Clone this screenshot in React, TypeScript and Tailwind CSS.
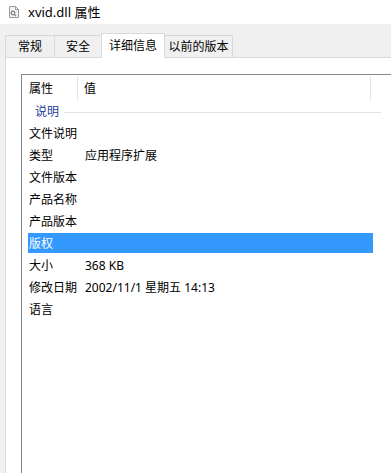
import React from "react";

type Row = { name: string; value?: string; selected?: boolean };

const rows: Row[] = [
  { name: "文件说明" },
  { name: "类型", value: "应用程序扩展" },
  { name: "文件版本" },
  { name: "产品名称" },
  { name: "产品版本" },
  { name: "版权", selected: true },
  { name: "大小", value: "368 KB" },
  { name: "修改日期", value: "2002/11/1 星期五 14:13" },
  { name: "语言" },
];

const tabs = [
  { label: "常规", w: "w-[50px]" },
  { label: "安全", w: "w-[48px]" },
  { label: "详细信息", w: "w-[64px]", active: true },
  { label: "以前的版本", w: "w-[69px]" },
];

function FileIcon() {
  return (
    <svg width="10" height="12" viewBox="0 0 10 12" className="shrink-0">
      <path d="M0.5 0.5h6l3 3v8h-9z" fill="#f4f4f4" stroke="#9a9a9a" />
      <path d="M6.5 0.5v3h3" fill="none" stroke="#9a9a9a" />
      <circle cx="4" cy="7" r="1.8" fill="none" stroke="#7d7d7d" strokeWidth="1.2" />
      <path d="M5.3 8.3l1.8 1.8" stroke="#7d7d7d" strokeWidth="1.2" />
    </svg>
  );
}

export default function App() {
  return (
    <div className="w-[391px] h-[473px] overflow-hidden bg-[#f0f0f0] text-[12px] text-black font-['Noto_Sans','Noto_Sans_CJK_SC',sans-serif] leading-none">
      {/* 标题栏 */}
      <div className="h-[24px] bg-white flex items-center pl-[9px] gap-[9px]">
        <FileIcon />
        <span className="text-[13px]">xvid.dll 属性</span>
      </div>

      {/* 选项卡 */}
      <div className="pl-[5px] pt-[9px] flex flex-col h-[449px]">
        <div className="flex items-end h-[24px] relative z-10">
          {tabs.map((t) =>
            t.active ? (
              <div
                key={t.label}
                className={`${t.w} h-[25px] -mb-px -ml-px bg-white border border-b-0 border-[#d9d9d9] flex items-center justify-center whitespace-nowrap`}
              >
                {t.label}
              </div>
            ) : (
              <div
                key={t.label}
                className={`${t.w} h-[22px] bg-[#f0f0f0] border border-b-0 border-[#d9d9d9] -ml-px first:ml-0 flex items-center justify-center whitespace-nowrap`}
              >
                {t.label}
              </div>
            )
          )}
        </div>

        {/* 面板 */}
        <div className="flex-1 bg-white border-l border-t border-[#d9d9d9] pl-[15px] pt-[16px]">
          <div className="h-full border-l border-t border-[#828790] pt-px">
            {/* 表头 */}
            <div className="h-[25px] flex items-center">
              <div className="w-[56px] h-full flex items-center pl-[7px] border-r border-[#e5e5e5]">属性</div>
              <div className="w-[293px] h-full flex items-center pl-[6px] border-r border-[#e5e5e5]">值</div>
            </div>

            {/* 分组 */}
            <div className="h-[21px] flex items-center pl-[13px] pt-px text-[#1e3c96]">
              <span>说明</span>
              <div className="ml-[5px] w-[317px] h-px bg-[#e2e2ec]" />
            </div>

            {/* 属性行 */}
            <div className="flex flex-col">
              {rows.map((r) => (
                <div key={r.name} className="h-[22px] flex items-center pl-[6px]">
                  <div
                    className={`w-[345px] h-[20px] flex items-center pt-px ${
                      r.selected ? "bg-[#3399ff] text-white" : ""
                    }`}
                  >
                    <div className="w-[57px] pl-[1px]">{r.name}</div>
                    <div>{r.value}</div>
                  </div>
                </div>
              ))}
            </div>
          </div>
        </div>
      </div>
    </div>
  );
}
